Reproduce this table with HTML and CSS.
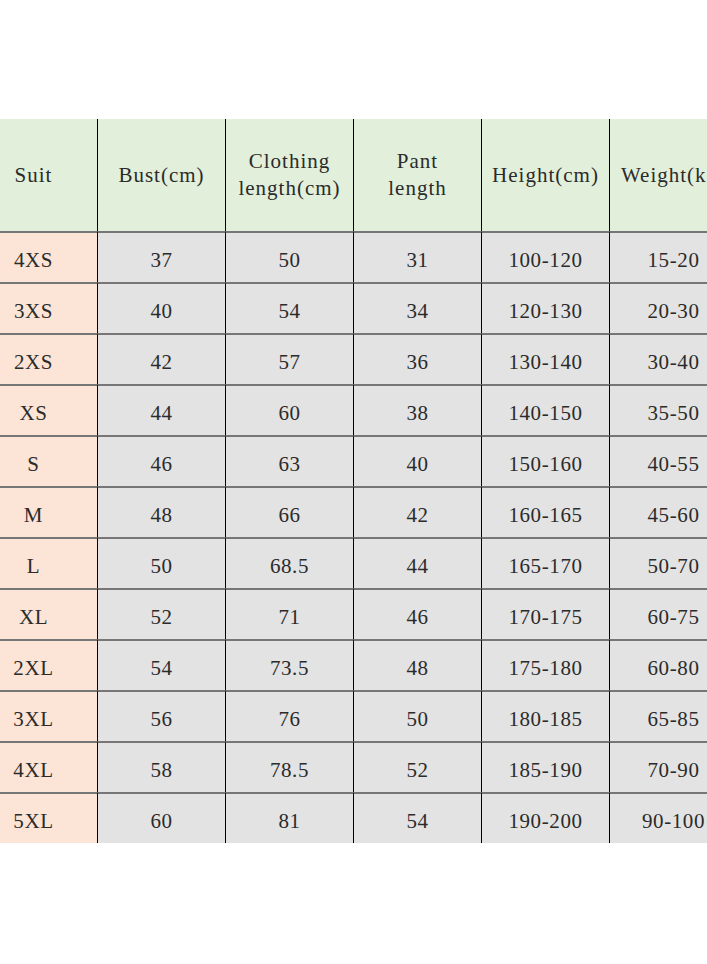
FILE: index.html
```html
<!DOCTYPE html>
<html>
<head>
<meta charset="utf-8">
<link rel="stylesheet" href="styles.css">
</head>
<body>
<div class="page">
  <div class="chart">
    <div class="cell head first">Suit</div>
    <div class="cell head">Bust(cm)</div>
    <div class="cell head">Clothing<br>length(cm)</div>
    <div class="cell head">Pant<br>length</div>
    <div class="cell head">Height(cm)</div>
    <div class="cell head">Weight(kg)</div>

    <div class="cell size">4XS</div><div class="cell">37</div><div class="cell">50</div><div class="cell">31</div><div class="cell">100-120</div><div class="cell">15-20</div>
    <div class="cell size">3XS</div><div class="cell">40</div><div class="cell">54</div><div class="cell">34</div><div class="cell">120-130</div><div class="cell">20-30</div>
    <div class="cell size">2XS</div><div class="cell">42</div><div class="cell">57</div><div class="cell">36</div><div class="cell">130-140</div><div class="cell">30-40</div>
    <div class="cell size">XS</div><div class="cell">44</div><div class="cell">60</div><div class="cell">38</div><div class="cell">140-150</div><div class="cell">35-50</div>
    <div class="cell size">S</div><div class="cell">46</div><div class="cell">63</div><div class="cell">40</div><div class="cell">150-160</div><div class="cell">40-55</div>
    <div class="cell size">M</div><div class="cell">48</div><div class="cell">66</div><div class="cell">42</div><div class="cell">160-165</div><div class="cell">45-60</div>
    <div class="cell size">L</div><div class="cell">50</div><div class="cell">68.5</div><div class="cell">44</div><div class="cell">165-170</div><div class="cell">50-70</div>
    <div class="cell size">XL</div><div class="cell">52</div><div class="cell">71</div><div class="cell">46</div><div class="cell">170-175</div><div class="cell">60-75</div>
    <div class="cell size">2XL</div><div class="cell">54</div><div class="cell">73.5</div><div class="cell">48</div><div class="cell">175-180</div><div class="cell">60-80</div>
    <div class="cell size">3XL</div><div class="cell">56</div><div class="cell">76</div><div class="cell">50</div><div class="cell">180-185</div><div class="cell">65-85</div>
    <div class="cell size">4XL</div><div class="cell">58</div><div class="cell">78.5</div><div class="cell">52</div><div class="cell">185-190</div><div class="cell">70-90</div>
    <div class="cell size">5XL</div><div class="cell">60</div><div class="cell">81</div><div class="cell">54</div><div class="cell">190-200</div><div class="cell">90-100</div>
  </div>
</div>
</body>
</html>
```

FILE: styles.css
```css
html, body {
  margin: 0;
  padding: 0;
  background: #ffffff;
}

.page {
  width: 707px;
  height: 964px;
  overflow: hidden;
  padding-top: 119px;
  box-sizing: border-box;
}

.chart {
  display: grid;
  grid-template-columns: repeat(6, 128px);
  grid-auto-rows: 51px;
  grid-template-rows: 112px;
  margin-left: -30px;
  width: 768px;
  font-family: "Liberation Serif", "Times New Roman", serif;
  font-size: 21px;
  color: #2b2b2b;
}

.cell {
  box-sizing: border-box;
  display: flex;
  align-items: center;
  justify-content: center;
  text-align: center;
  background: #e3e3e3;
  border-right: 1px solid #000000;
  border-top: 2px solid #767676;
  padding-top: 5px;
  letter-spacing: 0.6px;
}

.head {
  background: #e2efda;
  border-top: none;
  line-height: 27px;
  letter-spacing: 1px;
  padding-top: 0;
}

.size {
  background: #fce4d6;
}
```
